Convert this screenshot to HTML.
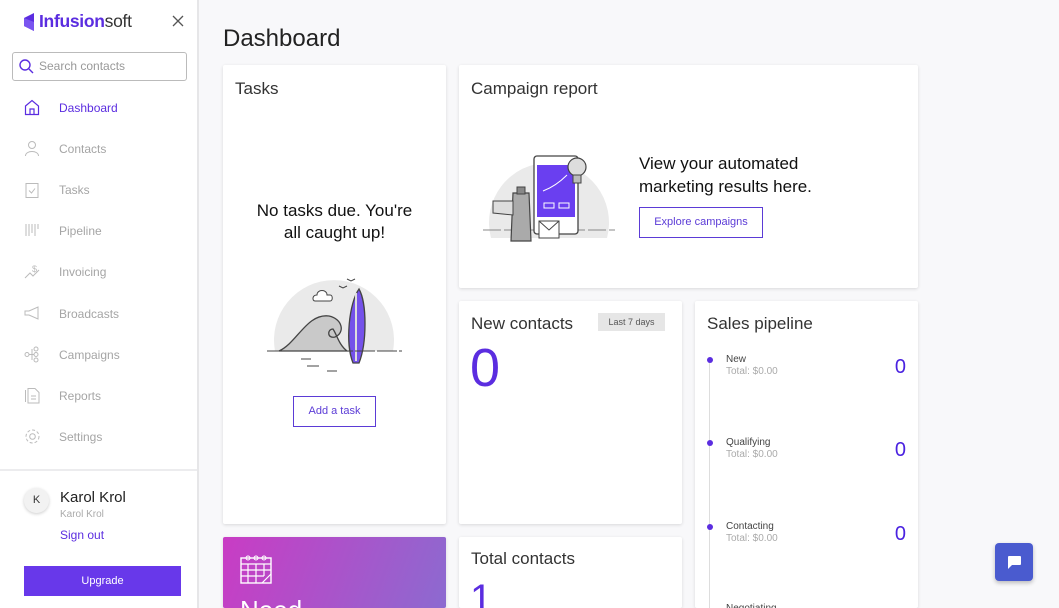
<!DOCTYPE html>
<html style="width:1059px;height:608px;overflow:hidden"><head><meta charset="utf-8"><style>
*{box-sizing:border-box;margin:0;padding:0}
body{width:1059px;height:608px;overflow:hidden;background:#f8f8fa;font-family:"Liberation Sans",sans-serif;position:relative;color:#222}
.sb{position:absolute;left:0;top:0;width:199px;height:608px;background:#fff;border-right:2px solid #e6e6e8}
.abs{position:absolute}
.nav{position:absolute;left:59px;font-size:12px;color:#a5a5a5}
.ic{position:absolute;left:24px}
.card{position:absolute;background:#fff;box-shadow:0 1px 3px rgba(0,0,0,.13);border-radius:2px;overflow:hidden}
.ct{position:absolute;left:12px;top:14px;font-size:17px;color:#333}
.btn{position:absolute;border:1px solid #5b3bd6;color:#5b3bd6;font-size:11px;text-align:center;background:#fff}
.pl{position:absolute;left:31px;font-size:10px;color:#444}
.pl span{display:block;color:#aaa;font-size:10px;margin-top:1px}
.pn{position:absolute;right:12px;font-size:20px;color:#4a22e0}
.dot{position:absolute;left:12px;width:6px;height:6px;border-radius:50%;background:#5b2de0}
</style></head><body>
<div class="sb">
 <svg class="abs" style="left:23px;top:12px" width="14" height="20" viewBox="0 0 14 20"><path d="M1 6 L11 1 V19 L1 14Z" fill="#5b2de0"/><path d="M1 6 L11 10 V19 L1 14Z" fill="#7a55f0"/></svg>
 <div class="abs" style="left:39px;top:11px;font-size:17.5px;color:#5b2de0;font-weight:bold;letter-spacing:-.3px">Infusion<span style="color:#333;font-weight:normal">soft</span></div>
 <svg class="abs" style="left:172px;top:15px" width="12" height="12"><path d="M1 1L11 11M11 1L1 11" stroke="#555" stroke-width="1.3"/></svg>
 <div class="abs" style="left:12px;top:52px;width:175px;height:29px;border:1px solid #bbb;border-radius:3px"></div>
 <svg class="abs" style="left:19px;top:59px" width="15" height="15"><circle cx="6" cy="6" r="5" fill="none" stroke="#5b2de0" stroke-width="1.4"/><path d="M10 10L14 14" stroke="#5b2de0" stroke-width="1.4"/></svg>
 <div class="abs" style="left:39px;top:59px;font-size:12px;color:#999">Search contacts</div>
 <svg class="ic" style="top:99px" width="16" height="17"><path d="M1.5 7 L8 1.5 L14.5 7 V15.5 H1.5Z M6 15.5 V10 H10 V15.5" fill="none" stroke="#5b2de0" stroke-width="1.2"/></svg>
 <div class="nav" style="top:101px;color:#5b2de0">Dashboard</div>
 <svg class="ic" style="top:140px" width="16" height="17"><circle cx="8" cy="5" r="3.5" fill="none" stroke="#bbb"/><path d="M1.5 16 C1.5 10 14.5 10 14.5 16" fill="none" stroke="#bbb"/></svg>
 <div class="nav" style="top:142px">Contacts</div>
 <svg class="ic" style="top:181px" width="16" height="17"><rect x="2" y="2.5" width="12" height="14" fill="none" stroke="#bbb"/><path d="M5 9.5L7.5 12L11 7.5" fill="none" stroke="#bbb"/></svg>
 <div class="nav" style="top:183px">Tasks</div>
 <svg class="ic" style="top:223px" width="16" height="14"><path d="M2 1V13M5 1V13M8 1V10M11 1V13M14 1V6" stroke="#bbb"/></svg>
 <div class="nav" style="top:224px">Pipeline</div>
 <svg class="ic" style="top:263px" width="16" height="17"><path d="M1 15L6 10L9 13L15 7" fill="none" stroke="#bbb"/><text x="8" y="9" font-size="9" fill="#bbb">$</text></svg>
 <div class="nav" style="top:265px">Invoicing</div>
 <svg class="ic" style="top:306px" width="16" height="14"><path d="M14 1V13L5 9H1V5H5Z" fill="none" stroke="#bbb"/></svg>
 <div class="nav" style="top:307px">Broadcasts</div>
 <svg class="ic" style="top:346px" width="16" height="17"><circle cx="3" cy="8.5" r="2" fill="none" stroke="#bbb"/><circle cx="12" cy="3" r="2" fill="none" stroke="#bbb"/><circle cx="12" cy="8.5" r="2" fill="none" stroke="#bbb"/><circle cx="12" cy="14" r="2" fill="none" stroke="#bbb"/><path d="M5 8.5H10M8 3V14" stroke="#bbb" fill="none"/></svg>
 <div class="nav" style="top:348px">Campaigns</div>
 <svg class="ic" style="top:387px" width="16" height="17"><path d="M4 1.5H11L15 5.5V16H4Z M1.5 3V15" fill="none" stroke="#bbb"/><path d="M7 9H12M7 12H12" stroke="#bbb"/></svg>
 <div class="nav" style="top:389px">Reports</div>
 <svg class="ic" style="top:428px" width="17" height="17"><circle cx="8.5" cy="8.5" r="2.8" fill="none" stroke="#bbb"/><circle cx="8.5" cy="8.5" r="6.5" fill="none" stroke="#bbb" stroke-dasharray="3 2"/></svg>
 <div class="nav" style="top:430px">Settings</div>
 <div class="abs" style="left:0;top:469px;width:197px;border-top:2px solid #ececee"></div>
 <div class="abs" style="left:24px;top:488px;width:25px;height:25px;border-radius:50%;background:#f2f2f2;box-shadow:0 1px 3px rgba(0,0,0,.2);font-size:11px;text-align:center;line-height:25px;color:#333">K</div>
 <div class="abs" style="left:60px;top:489px;font-size:15px;color:#222">Karol Krol</div>
 <div class="abs" style="left:60px;top:509px;font-size:10px;color:#aaa">Karol Krol</div>
 <div class="abs" style="left:60px;top:528px;font-size:12px;color:#5b2de0">Sign out</div>
 <div class="abs" style="left:24px;top:566px;width:157px;height:30px;background:#6838ea;color:#fff;font-size:11px;text-align:center;line-height:30px">Upgrade</div>
</div>

<div class="abs" style="left:223px;top:25px;font-size:24px;color:#222">Dashboard</div>

<div class="card" style="left:223px;top:65px;width:223px;height:459px">
 <div class="ct">Tasks</div>
 <div class="abs" style="left:0;width:223px;top:135px;text-align:center;font-size:17px;line-height:22px;color:#111">No tasks due. You're<br>all caught up!</div>
 <svg class="abs" style="left:44px;top:198px" width="135" height="110" viewBox="0 0 135 110">
  <path d="M8 88 A60 60 0 1 1 126 88Z" fill="#eaeaea"/>
  <path d="M12 88 C30 80 40 50 62 53 C76 56 78 70 68 74 C60 76 60 66 66 66 C70 72 72 82 80 88Z" fill="#c9c9c9" stroke="#444" stroke-width="1.3"/>
  <path d="M50 32c0-6 10-6 10 0h3c3 0 3 6 0 6H48c-3 0-3-6 2-6z" fill="#fff" stroke="#444"/>
  <path d="M86 100 C78 80 82 40 92 26 C100 40 100 80 92 100Z" fill="#7552ea" stroke="#444" stroke-width="1.3"/>
  <path d="M89 30 L89 98" stroke="#ddd" stroke-width="2"/>
  <path d="M0 88H135" stroke="#444" stroke-dasharray="20 2"/>
  <path d="M34 96h10M40 103h12M60 108h10" stroke="#444"/>
  <path d="M72 23l4 2 4-2M80 16l4 2 4-2" fill="none" stroke="#444"/>
 </svg>
 <div class="btn" style="left:70px;top:331px;width:83px;height:31px;line-height:29px">Add a task</div>
</div>

<div class="card" style="left:459px;top:65px;width:459px;height:223px">
 <div class="ct">Campaign report</div>
 <svg class="abs" style="left:20px;top:78px" width="140" height="100" viewBox="0 0 140 100">
  <path d="M12 95 A60 60 0 1 1 128 95Z" fill="#eaeaea"/>
  <path d="M4 87H136" stroke="#888" stroke-dasharray="18 3"/>
  <rect x="55" y="13" width="44" height="78" rx="3" fill="#fff" stroke="#444" stroke-width="1.3"/>
  <rect x="58" y="22" width="38" height="52" fill="#6a3ff0"/>
  <path d="M64 48 C72 45 80 40 88 32" stroke="#fff" fill="none"/>
  <rect x="65" y="60" width="10" height="5" fill="none" stroke="#fff"/><rect x="80" y="60" width="10" height="5" fill="none" stroke="#fff"/>
  <circle cx="98" cy="24" r="9" fill="#ddd" stroke="#444" stroke-width="1.2"/><rect x="94" y="32" width="8" height="8" fill="#bbb" stroke="#444"/>
  <path d="M60 78 L80 78 L80 95 L60 95Z M60 78 L70 87 L80 78" fill="#fff" stroke="#444"/>
  <path d="M34 50 L50 50 L52 98 L32 98Z" fill="#aaa" stroke="#444" stroke-width="1.2"/>
  <path d="M14 58 L34 58 L34 72 L14 70Z" fill="#ddd" stroke="#444"/>
  <rect x="38" y="44" width="8" height="7" fill="#888" stroke="#444"/>
 </svg>
 <div class="abs" style="left:180px;top:87px;font-size:17px;line-height:23px;color:#111">View your automated<br>marketing results here.</div>
 <div class="btn" style="left:180px;top:142px;width:124px;height:31px;line-height:29px">Explore campaigns</div>
</div>

<div class="card" style="left:459px;top:301px;width:223px;height:223px">
 <div class="ct" style="top:13px">New contacts</div>
 <div class="abs" style="left:139px;top:12px;width:67px;height:18px;background:#e6e6e6;font-size:9px;color:#555;text-align:center;line-height:18px">Last 7 days</div>
 <div class="abs" style="left:11px;top:36px;font-size:54px;color:#5b2de0">0</div>
</div>

<div class="card" style="left:695px;top:301px;width:223px;height:307px">
 <div class="ct" style="top:13px">Sales pipeline</div>
 <div class="abs" style="left:14px;top:60px;height:260px;border-left:1px solid #ddd"></div>
 <div class="dot" style="top:56px"></div><div class="pl" style="top:53px">New<span>Total: $0.00</span></div><div class="pn" style="top:55px">0</div>
 <div class="dot" style="top:139px"></div><div class="pl" style="top:136px">Qualifying<span>Total: $0.00</span></div><div class="pn" style="top:138px">0</div>
 <div class="dot" style="top:223px"></div><div class="pl" style="top:220px">Contacting<span>Total: $0.00</span></div><div class="pn" style="top:222px">0</div>
 <div class="pl" style="top:302px">Negotiating</div>
</div>

<div class="card" style="left:223px;top:537px;width:223px;height:71px;background:linear-gradient(110deg,#c93cc4,#8c6ad0)">
 <svg class="abs" style="left:17px;top:17px" width="32" height="30"><rect x="1" y="4" width="30" height="25" fill="none" stroke="#fff" stroke-width="1.4"/><path d="M1 10H31M1 16H31M1 22H24M8 10V29M16 10V29M24 10V22M22 29L31 20" stroke="#fff" stroke-width="1.2" fill="none"/><circle cx="8" cy="4" r="2" fill="none" stroke="#fff"/><circle cx="16" cy="4" r="2" fill="none" stroke="#fff"/><circle cx="24" cy="4" r="2" fill="none" stroke="#fff"/></svg>
 <div class="abs" style="left:17px;top:58px;font-size:26px;color:#fff">Need</div>
</div>

<div class="card" style="left:459px;top:537px;width:223px;height:71px">
 <div class="ct" style="top:12px">Total contacts</div>
 <div class="abs" style="left:11px;top:40px;font-size:40px;color:#5b2de0">1</div>
</div>

<div class="abs" style="left:995px;top:543px;width:38px;height:38px;background:#4a5bcf;border-radius:4px;box-shadow:0 2px 4px rgba(0,0,0,.25)">
 <svg class="abs" style="left:11px;top:12px" width="16" height="15"><path d="M2 1H14Q15 1 15 2V9Q15 10 14 10H6L2 14V2Q2 1 3 1Z" fill="#fff"/></svg>
</div>
</body></html>
